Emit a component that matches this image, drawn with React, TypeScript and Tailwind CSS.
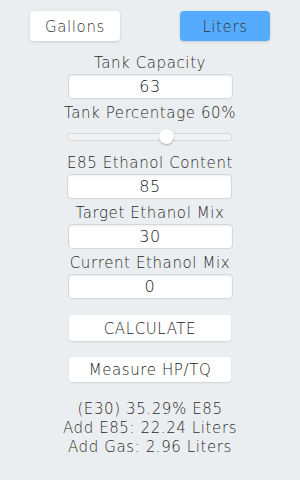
import { useState } from 'react'

const font = { fontFamily: '"DejaVu Sans", "Liberation Sans", sans-serif' }

function Field({ label, value }: { label: string; value: string }) {
  return (
    <div className="flex flex-col items-center">
      <div className="h-[25px] pt-[4px] leading-[21px] text-[15px] tracking-[0.6px] text-[#2a2a2a]">{label}</div>
      <div className="w-[165px] h-[25px] bg-white border border-[#d6d6d6] rounded-[4px] shadow-[inset_0_1px_2px_rgba(0,0,0,0.08)] flex items-center justify-center text-[16px] tracking-[0.6px] text-[#222]">
        {value}
      </div>
    </div>
  )
}

export default function App() {
  const [unit, setUnit] = useState<'gal' | 'l'>('l')
  const pct = 60

  return (
    <div className="w-[300px] h-[480px] bg-[#ebeef0] font-light flex flex-col items-center" style={font}>
      {/* Unit toggle */}
      <div className="w-full flex justify-between px-[30px] pt-[11px]">
        <button
          onClick={() => setUnit('gal')}
          className={unit === 'gal'
            ? 'w-[90px] h-[30px] pt-[3px] rounded-[4px] bg-[#55acff] text-[15px] tracking-[0.6px] text-[#333] shadow-[0_1px_3px_rgba(0,0,0,0.15)]'
            : 'w-[90px] h-[30px] pt-[3px] rounded-[4px] bg-white text-[15px] tracking-[0.6px] text-[#333] shadow-[0_1px_3px_rgba(0,0,0,0.15)]'}
        >
          Gallons
        </button>
        <button
          onClick={() => setUnit('l')}
          className={unit === 'l'
            ? 'w-[90px] h-[30px] pt-[3px] rounded-[4px] bg-[#55acff] text-[15px] tracking-[0.6px] text-[#333] shadow-[0_1px_3px_rgba(0,0,0,0.15)]'
            : 'w-[90px] h-[30px] pt-[3px] rounded-[4px] bg-white text-[15px] tracking-[0.6px] text-[#333] shadow-[0_1px_3px_rgba(0,0,0,0.15)]'}
        >
          Liters
        </button>
      </div>

      <div className="mt-[8px]">
        <Field label="Tank Capacity" value="63" />
      </div>

      {/* Tank percentage slider */}
      <div className="flex flex-col items-center">
        <div className="h-[25px] pt-[4px] leading-[21px] text-[15px] tracking-[0.6px] text-[#2a2a2a]">Tank Percentage {pct}%</div>
        <div className="relative w-[165px] h-[25px] flex items-center">
          <div className="w-full h-[8px] rounded-[3px] bg-[#f2f2f2] border border-[#d8d8d8]" />
          <div
            className="absolute top-[5px] w-[15px] h-[15px] rounded-full bg-white shadow-[0_1px_2px_rgba(0,0,0,0.3)]"
            style={{ left: `calc(${pct}% - 7px)` }}
          />
        </div>
      </div>

      <Field label="E85 Ethanol Content" value="85" />
      <Field label="Target Ethanol Mix" value="30" />
      <Field label="Current Ethanol Mix" value="0" />

      <button className="mt-[16px] w-[162px] h-[26px] pt-[2px] rounded-[4px] bg-white text-[15px] tracking-[0.6px] text-[#222] shadow-[0_1px_2px_rgba(0,0,0,0.1)]">
        CALCULATE
      </button>
      <button className="mt-[16px] w-[162px] h-[25px] pt-[2px] rounded-[4px] bg-white text-[15px] tracking-[0.6px] text-[#222] shadow-[0_1px_2px_rgba(0,0,0,0.1)]">
        Measure HP/TQ
      </button>

      <div className="mt-[18px] flex flex-col items-center text-[15px] leading-[19px] tracking-[0.6px] text-[#2a2a2a]">
        <div>(E30) 35.29% E85</div>
        <div>Add E85: 22.24 Liters</div>
        <div>Add Gas: 2.96 Liters</div>
      </div>
    </div>
  )
}
